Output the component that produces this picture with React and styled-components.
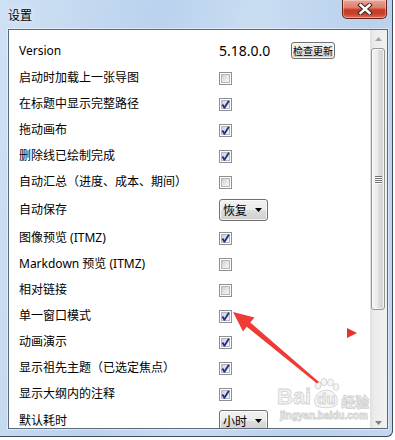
import React from "react";
import styled, { createGlobalStyle } from "styled-components";

const GlobalStyle = createGlobalStyle`
  html, body { margin: 0; padding: 0; background: #ffffff; }
  body { font-family: "Noto Sans", "Noto Sans CJK SC", sans-serif; }
  * { box-sizing: border-box; }
`;

const Window = styled.div`
  position: relative;
  width: 393px;
  height: 437px;
  border-right: 1px solid #3d4b5e;
  border-bottom: 1px solid #3d4b5e;
  border-bottom-right-radius: 6px;
  background: linear-gradient(100deg, #cfe1f4 0%, #bad2ed 35%, #c9ddf2 55%, #b9d1ec 80%, #c3d8ef 100%);
  display: flex;
  flex-direction: column;
  overflow: hidden;
`;

const TitleBar = styled.div`
  height: 29px;
  flex-shrink: 0;
  display: flex;
  justify-content: space-between;
  align-items: flex-start;
  padding: 0 5px 0 8px;
`;

const Title = styled.div`
  margin-top: 7px;
  font-family: "Noto Sans CJK SC", sans-serif;
  font-size: 12px;
  line-height: 16px;
  color: #000;
  text-shadow: 0 0 6px rgba(255, 255, 255, 0.9);
`;

const CloseButton = styled.div`
  width: 45px;
  height: 19px;
  border: 1px solid #6a2017;
  border-top: none;
  border-radius: 0 0 5px 5px;
  background: linear-gradient(180deg, #eaa596 0%, #dc7e6c 42%, #c73a25 55%, #c8412c 78%, #da735a 100%);
  box-shadow: inset 0 0 0 1px rgba(255, 255, 255, 0.35);
  display: flex;
  align-items: center;
  justify-content: center;
`;

const BodyArea = styled.div`
  flex: 1;
  padding: 0 4px 7px 8px;
  display: flex;
`;

const Panel = styled.div`
  width: 380px;
  height: 400px;
  border: 1px solid #5d6977;
  background: #ffffff;
  display: flex;
  box-shadow: 0 0 0 1px rgba(255, 255, 255, 0.45);
`;

const Content = styled.div`
  position: relative;
  flex: 1;
  overflow: hidden;
  padding: 6px 0 0 10px;
`;

const Row = styled.div`
  display: flex;
  align-items: center;
  height: ${(p) => p.$h}px;
`;

const Label = styled.div`
  width: 200px;
  flex-shrink: 0;
  font-size: 12px;
  line-height: 14px;
  color: #000;
  white-space: nowrap;
`;

const Value = styled.div`
  width: 72px;
  font-size: 14px;
  line-height: 18px;
  color: #000;
`;

const UpdateButton = styled.div`
  width: 44px;
  height: 17px;
  border: 1px solid #707070;
  border-radius: 3px;
  background: linear-gradient(180deg, #f2f2f2 0%, #ebebeb 50%, #dddddd 50%, #cfcfcf 100%);
  box-shadow: inset 0 0 0 1px rgba(255, 255, 255, 0.7);
  font-family: "Noto Sans CJK SC", sans-serif;
  font-size: 10px;
  line-height: 15px;
  text-align: center;
  color: #000;
  white-space: nowrap;
`;

const Box = styled.span`
  position: relative;
  display: flex;
  width: 13px;
  height: 13px;
  border: 1px solid #8e8f8f;
  background: #ffffff;
  padding: 1px;
`;

const BoxInner = styled.span`
  flex: 1;
  border: 1px solid #b4b8bc;
  background: linear-gradient(135deg, #cdd0d3 0%, #e4e6e8 50%, #f6f6f6 100%);
`;

const CheckMark = styled.svg`
  position: absolute;
  left: -1px;
  top: -1px;
`;

const SelectBox = styled.div`
  width: 49px;
  height: 22px;
  border: 1px solid #707070;
  border-radius: 3px;
  background: linear-gradient(180deg, #f2f2f2 0%, #ebebeb 50%, #dddddd 50%, #cfcfcf 100%);
  box-shadow: inset 0 0 0 1px rgba(255, 255, 255, 0.7);
  display: flex;
  align-items: center;
  justify-content: space-between;
  padding: 0 5px 0 3px;
  font-family: "Noto Sans CJK SC", sans-serif;
  font-size: 12px;
  line-height: 14px;
  color: #000;
`;

const ScrollBar = styled.div`
  width: 17px;
  flex-shrink: 0;
  display: flex;
  flex-direction: column;
  background: linear-gradient(90deg, #e0e0e0 0%, #ececec 25%, #f1f1f1 100%);
`;

const ScrollArrow = styled.div`
  height: 17px;
  flex-shrink: 0;
  display: flex;
  justify-content: center;
  align-items: ${(p) => (p.$down ? "flex-end" : "center")};
  padding-bottom: ${(p) => (p.$down ? "3px" : "0")};
`;

const Track = styled.div`
  flex: 1;
  padding: 1px 2px 0 1px;
`;

const Thumb = styled.div`
  height: 262px;
  border: 1px solid #959595;
  border-radius: 3px;
  background: linear-gradient(90deg, #f4f4f4 0%, #ececec 45%, #dcdcdc 55%, #d2d2d2 100%);
  box-shadow: inset 0 0 0 1px rgba(255, 255, 255, 0.75);
  display: flex;
  flex-direction: column;
  align-items: center;
  justify-content: center;
  gap: 1px;
`;

const Grip = styled.span`
  width: 7px;
  height: 1px;
  background: #6f6f6f;
  box-shadow: 0 1px 0 #fbfbfb;
`;

const Watermark = styled.div`
  position: absolute;
  left: 268px;
  top: 348px;
  width: 100px;
  pointer-events: none;
  font-family: "Liberation Sans", sans-serif;
  font-weight: bold;
  color: #f3f3f3;
  -webkit-text-stroke: 0.8px #d2d2d2;
  display: flex;
  flex-direction: column;
  align-items: flex-start;
  white-space: nowrap;
`;

const MarkLine = styled.div`
  display: flex;
  align-items: flex-end;
  height: 31px;
`;

const MarkBig = styled.span`
  flex-shrink: 0;
  font-size: ${(p) => p.$size}px;
  line-height: ${(p) => p.$size + 2}px;
  font-family: ${(p) => (p.$cjk ? '"Noto Sans CJK SC", sans-serif' : '"Liberation Sans", sans-serif')};
`;

const Paw = styled.span`
  position: relative;
  flex-shrink: 0;
  width: 30px;
  height: 31px;
  display: flex;
  align-items: flex-end;
  justify-content: center;
  padding-bottom: 2px;
  font-size: 15px;
  line-height: 16px;
`;

const PawShape = styled.svg`
  position: absolute;
  left: 0;
  top: 0;
`;

const PawText = styled.span`
  position: relative;
`;

const MarkSmall = styled.div`
  font-size: 10px;
  line-height: 13px;
  margin-left: 3px;
`;

const Overlay = styled.svg`
  position: absolute;
  left: 0;
  top: 0;
  pointer-events: none;
`;

const rows = [
  { label: "Version", type: "version", h: 29 },
  { label: "启动时加载上一张导图", checked: false },
  { label: "在标题中显示完整路径", checked: true },
  { label: "拖动画布", checked: true },
  { label: "删除线已绘制完成", checked: true },
  { label: "自动汇总（进度、成本、期间）", checked: false },
  { label: "自动保存", type: "select", value: "恢复", h: 30 },
  { label: "图像预览 (ITMZ)", checked: true },
  { label: "Markdown 预览 (ITMZ)", checked: false },
  { label: "相对链接", checked: false },
  { label: "单一窗口模式", checked: true },
  { label: "动画演示", checked: true },
  { label: "显示祖先主题（已选定焦点）", checked: true },
  { label: "显示大纲内的注释", checked: true },
  { label: "默认耗时", type: "select", value: "小时", h: 28 },
];

function Checkbox({ checked }) {
  return (
    <Box>
      <BoxInner />
      {checked && (
        <CheckMark width="13" height="13" viewBox="0 0 13 13">
          <path d="M3.4 6.6 L5.4 9.8 L9.9 2.8" fill="none" stroke="#232f8a" strokeWidth="1.9" strokeLinejoin="round" />
        </CheckMark>
      )}
    </Box>
  );
}

function Select({ value }) {
  return (
    <SelectBox>
      <span>{value}</span>
      <svg width="7" height="4" viewBox="0 0 7 4">
        <path d="M0 0 L7 0 L3.5 4 Z" fill="#000" />
      </svg>
    </SelectBox>
  );
}

function Control({ row }) {
  if (row.type === "version") {
    return (
      <>
        <Value>5.18.0.0</Value>
        <UpdateButton>检查更新</UpdateButton>
      </>
    );
  }
  if (row.type === "select") return <Select value={row.value} />;
  return <Checkbox checked={row.checked} />;
}

export default function App() {
  return (
    <>
      <GlobalStyle />
      <Window>
        <TitleBar>
          <Title>设置</Title>
          <CloseButton>
            <svg width="16" height="12" viewBox="0 0 16 12">
              <path d="M3.5 2 L12.5 10 M12.5 2 L3.5 10" stroke="#3a2a28" strokeWidth="4.4" strokeLinecap="square" />
              <path d="M3.5 2 L12.5 10 M12.5 2 L3.5 10" stroke="#ffffff" strokeWidth="2.4" strokeLinecap="square" />
            </svg>
          </CloseButton>
        </TitleBar>
        <BodyArea>
          <Panel>
            <Content>
              {rows.map((row) => (
                <Row key={row.label} $h={row.h || 26}>
                  <Label>{row.label}</Label>
                  <Control row={row} />
                </Row>
              ))}
              <Watermark>
                <MarkLine>
                  <MarkBig $size={22}>Bai</MarkBig>
                  <Paw>
                    <PawShape width="30" height="31" viewBox="0 0 30 31">
                      <g fill="#f5f5f5" stroke="#d2d2d2" strokeWidth="0.9">
                        <ellipse cx="7" cy="7" rx="3" ry="4" />
                        <ellipse cx="13" cy="4" rx="3" ry="3.6" />
                        <ellipse cx="19.5" cy="4.5" rx="3" ry="3.6" />
                        <ellipse cx="25" cy="9" rx="2.8" ry="3.4" />
                        <path d="M4 26 C2 18 9 12 15 12 C22 12 28 18 26 26 C24 31 6 31 4 26 Z" />
                      </g>
                    </PawShape>
                    <PawText>du</PawText>
                  </Paw>
                  <MarkBig $size={14} $cjk>经验</MarkBig>
                </MarkLine>
                <MarkSmall>jingyan.baidu.com</MarkSmall>
              </Watermark>
            </Content>
            <ScrollBar>
              <ScrollArrow>
                <svg width="7" height="4" viewBox="0 0 7 4">
                  <path d="M0 4 L7 4 L3.5 0 Z" fill="#a4a4a4" />
                </svg>
              </ScrollArrow>
              <Track>
                <Thumb>
                  <Grip />
                  <Grip />
                  <Grip />
                  <Grip />
                </Thumb>
              </Track>
              <ScrollArrow $down>
                <svg width="7" height="4" viewBox="0 0 7 4">
                  <path d="M0 0 L7 0 L3.5 4 Z" fill="#808080" />
                </svg>
              </ScrollArrow>
            </ScrollBar>
          </Panel>
        </BodyArea>
        <Overlay width="395" height="440" viewBox="0 0 395 440">
          <polygon points="233,312 254.5,317.5 250.3,322.6 319,382 317,383.5 246.7,326.8 243,331.5" fill="#ef3b36" />
          <polygon points="347,328 357,333 347,338" fill="#e8322d" />
        </Overlay>
      </Window>
    </>
  );
}
